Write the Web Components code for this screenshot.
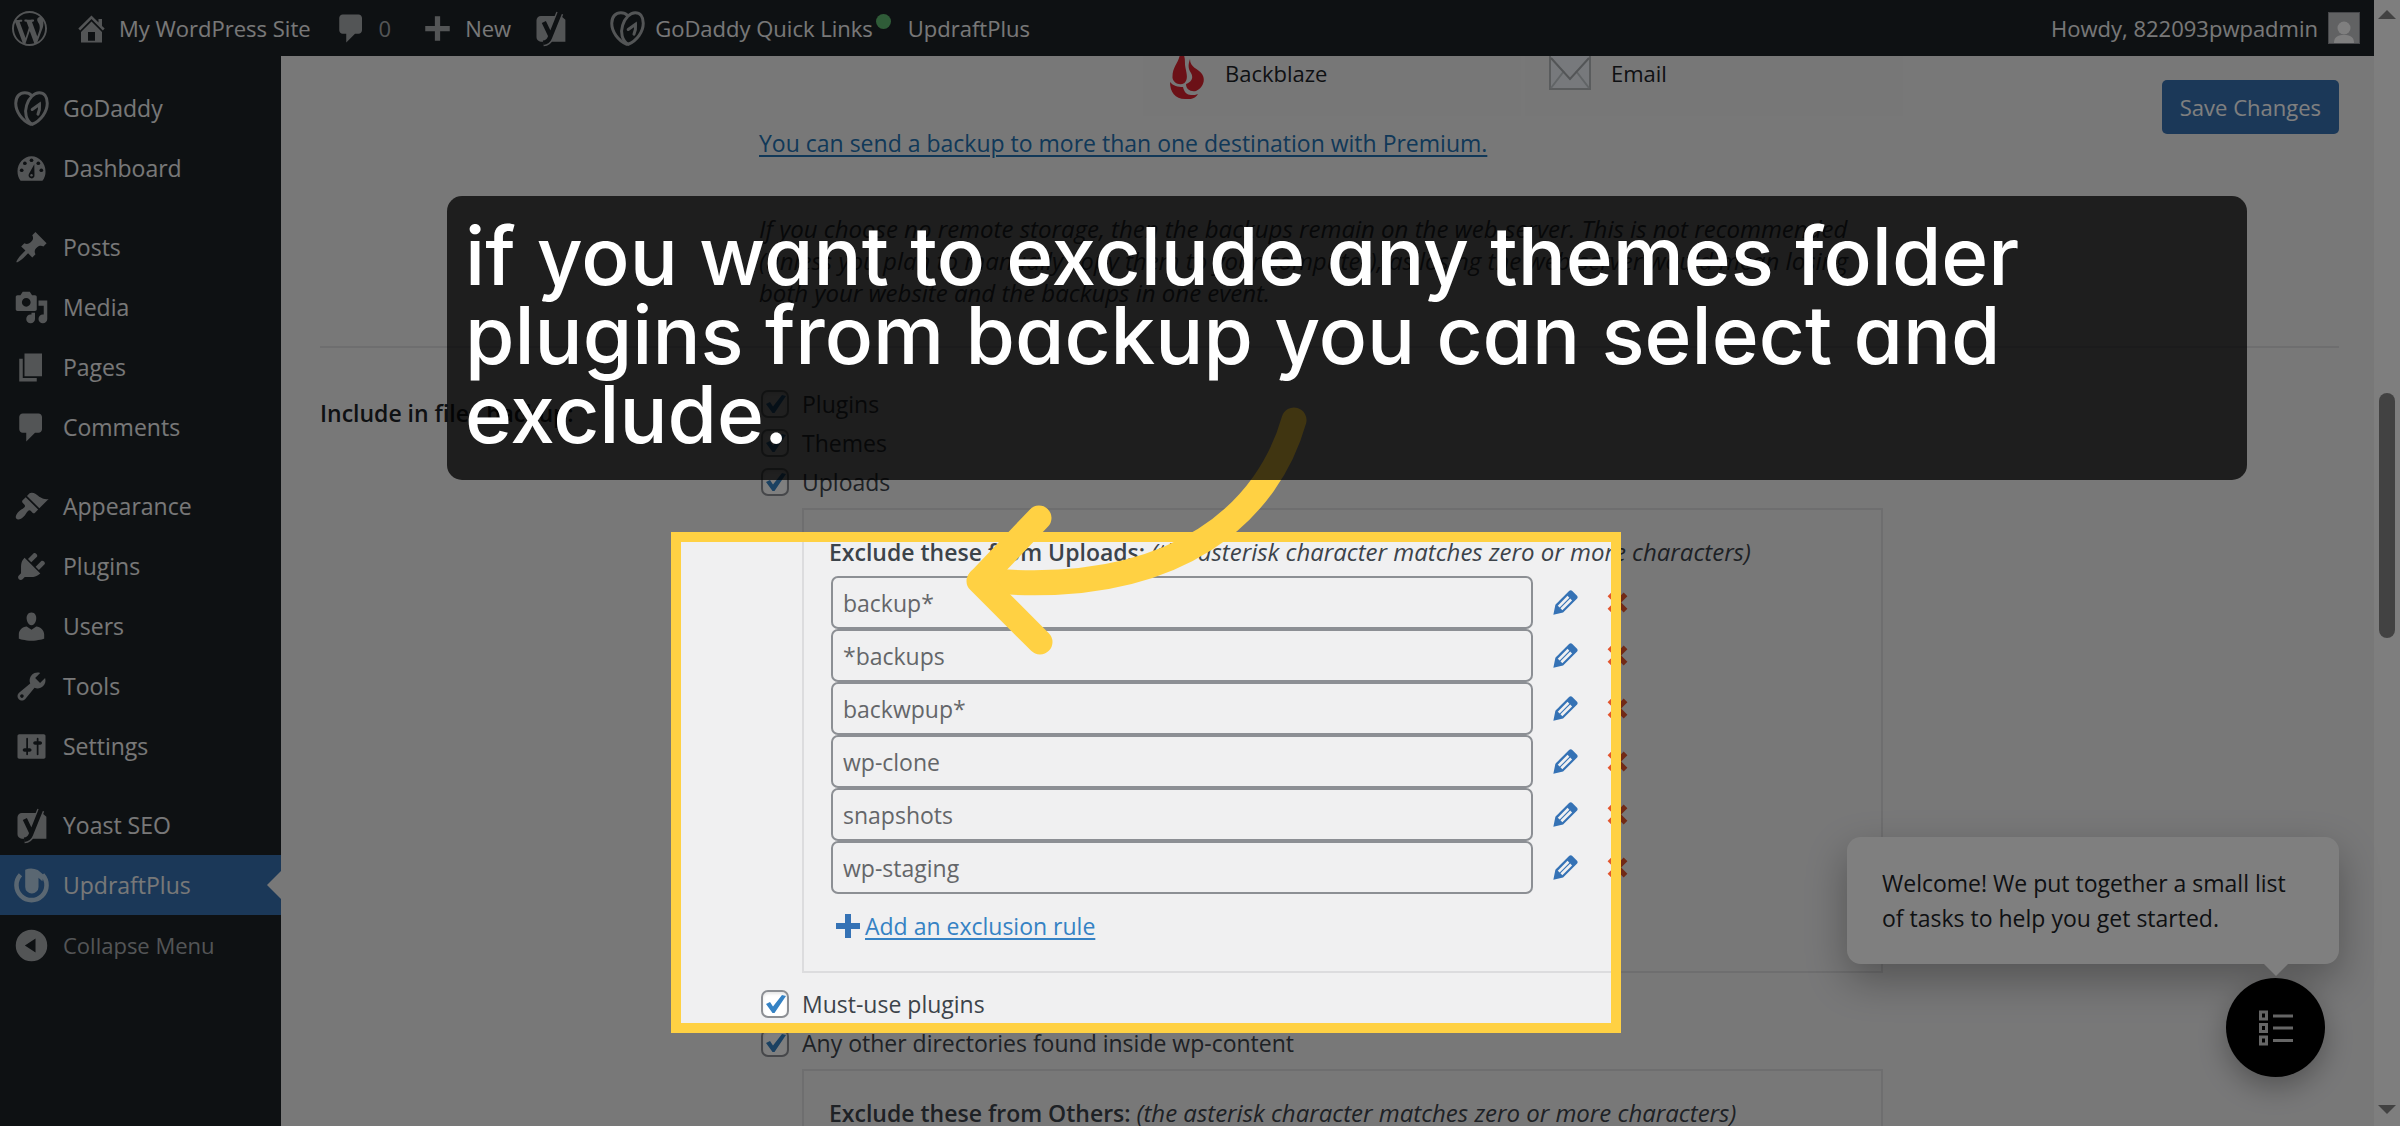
<!DOCTYPE html>
<html lang="en">
<head>
<meta charset="utf-8">
<title>UpdraftPlus settings</title>
<style>
  html, body {
    margin: 0;
    height: 100%;
    overflow: hidden;
  }

  body {
    font-family: "Open Sans", "Noto Sans", sans-serif;
    font-size: 23px;
    line-height: 32px;
    color: #3c434a;
    background: #f0f0f1;
  }
</style>
</head>
<body>
<wp-screen></wp-screen>

<script>
/* 20x20 glyphs, drawn with currentColor; --hole is the colour behind them */
const ICONS = {
  wordpress: '<path d="M20 10c0-5.51-4.49-10-10-10C4.48 0 0 4.49 0 10c0 5.52 4.48 10 10 10 5.51 0 10-4.48 10-10zM7.78 15.37L4.37 6.22c.55-.02 1.17-.08 1.17-.08.5-.06.44-1.13-.06-1.11 0 0-1.45.11-2.37.11-.18 0-.37 0-.58-.01C4.12 2.69 6.87 1.11 10 1.11c2.33 0 4.45.87 6.05 2.34-.68-.11-1.65.39-1.65 1.58 0 .74.45 1.36.9 2.1.35.61.55 1.36.55 2.46 0 1.49-1.4 5-1.4 5l-3.03-8.37c.54-.02.82-.17.82-.17.5-.05.44-1.25-.06-1.22 0 0-1.44.12-2.38.12-.87 0-2.33-.12-2.33-.12-.5-.03-.56 1.2-.06 1.22l.92.08 1.26 3.41zM17.41 10c.24-.64.74-1.87.43-4.25.7 1.29 1.05 2.71 1.05 4.25 0 3.29-1.73 6.24-4.4 7.78.97-2.59 1.94-5.2 2.92-7.78zM6.1 18.09C3.12 16.65 1.11 13.53 1.11 10c0-1.3.23-2.48.72-3.59C3.25 10.3 4.67 14.2 6.1 18.09zm4.03-6.63l2.58 6.98c-.86.29-1.76.45-2.71.45-.79 0-1.57-.11-2.29-.33.81-2.38 1.62-4.74 2.42-7.1z"/>',
  home: '<path fill-rule="evenodd" d="M16 8.5l1.53 1.53-1.06 1.06L10 4.6l-6.47 6.49-1.06-1.06L10 2.5l4 4v-2h2v4zm-6-2.46l6 5.99V18H4v-5.97zM12 17v-5H8v5h4z"/>',
  comments: '<path d="M5 2h9c1.1 0 2 .9 2 2v7c0 1.1-.9 2-2 2h-2l-5 5v-5H5c-1.1 0-2-.9-2-2V4c0-1.1.9-2 2-2z"/>',
  plus: '<path d="M17 8.500v3h-5.500V17h-3v-5.500H3v-3h5.500V3h3v5.500z"/>',
  yoast: '<path d="M4.500 2.800h11.500L18.500 5v12.500h-14A2.500 2.500 0 0 1 2 15V5.300a2.500 2.500 0 0 1 2.500-2.500z"/><g fill="none" stroke-linejoin="round"><path stroke="currentColor" stroke-width="4.200" d="M15.300 1.200L9.600 15.300Q8.600 17.900 6 18"/><path stroke="var(--hole)" stroke-width="2.600" d="M15.500.6L9.600 15.300Q8.600 17.900 5.800 18.200M6.200 6.300l3.600 7.500"/></g>',
  godaddy: '<g fill="none" stroke="currentColor" stroke-width="1.700" stroke-linecap="round"><path d="M9.600 19C4.600 17 1 11.800 1 7 1 3 3.400 1 6.200 1c1.600 0 2.900.6 3.800 1.600"/><path d="M10.400 19C6.800 17 5.900 12.200 7.200 8.200 8.500 4 11.500 1 14.400 1 17.200 1 19 3.200 19 7c0 4.800-3.600 10-8.600 12z"/><path d="M10.400 10.600l4.200-3c.2 2-.2 4-.9 5.600"/></g>',
  dashboard: '<path d="M3.760 17h12.480A8.400 8.400 0 0 0 18 11.500C18 7 14.420 3 10 3s-8 4-8 8.500c0 2 .66 4.100 1.760 5.500z"/><g fill="var(--hole)"><circle cx="10" cy="5.300" r="1.050"/><circle cx="6.200" cy="7" r="1.050"/><circle cx="13.900" cy="7" r="1.050"/><circle cx="4.400" cy="11" r="1.050"/><circle cx="15.600" cy="11" r="1.050"/><path d="M11.600 7.600l.1 6.100a1.700 1.700 0 1 1-3.200-.5z"/></g><circle cx="10" cy="13.900" r=".7"/>',
  posts: '<path d="M10.440 3.020l1.820-1.820 6.360 6.350-1.830 1.820c-1.050-.68-2.480-.57-3.410.36l-.75.75c-.92.93-1.040 2.350-.35 3.410l-1.830 1.820-2.410-2.410-2.800 2.790c-.42.42-3.380 2.710-3.800 2.290s1.860-3.390 2.280-3.810l2.790-2.790L4.100 9.360l1.830-1.820c1.050.69 2.480.57 3.400-.36l.75-.75c.93-.92 1.050-2.350.36-3.410z"/>',
  media: '<path fill-rule="evenodd" d="M13 11V4c0-.55-.45-1-1-1h-1.670L9 1H5L3.670 3H2c-.55 0-1 .45-1 1v7c0 .55.45 1 1 1h10c.55 0 1-.45 1-1zM7 4.500c1.380 0 2.500 1.120 2.500 2.500S8.380 9.500 7 9.500 4.500 8.380 4.500 7 5.620 4.500 7 4.500zM14 6h5v10.500c0 1.380-1.120 2.500-2.500 2.500S14 17.880 14 16.500s1.120-2.500 2.500-2.500c.17 0 .34.02.5.05V9h-3V6zm-4 8.050V13h2v3.500c0 1.380-1.120 2.500-2.500 2.500S7 17.880 7 16.500 8.120 14 9.500 14c.17 0 .34.02.5.05z"/>',
  pages: '<path d="M6 15V2h10v13H6zm-1 1h8v2H3V5h2v11z"/>',
  appearance: '<path d="M14.480 11.060L7.410 3.990l1.500-1.500c.5-.56 2.300-.47 3.510.32 1.210.8 1.430 1.280 2.910 2.100 1.180.64 2.450 1.260 4.450.85zm-.71.71L6.700 4.700 4.930 6.470c-.39.39-.39 1.020 0 1.410l1.060 1.060c.39.39.39 1.030 0 1.420-.6.6-1.430 1.110-2.210 1.690-.35.26-.7.53-1.010.84C1.430 14.230.4 16.080 1.400 17.070c.99 1 2.840-.03 4.180-1.360.31-.31.58-.66.85-1.020.57-.78 1.080-1.610 1.690-2.210.39-.39 1.020-.39 1.410 0l1.060 1.060c.39.39 1.020.39 1.410 0z"/>',
  plugins: '<path d="M13.110 4.360L9.870 7.600 8 5.730l3.240-3.240c.35-.34 1.050-.2 1.560.32.52.51.66 1.210.31 1.550zm-8 1.770l.91-1.120 9.010 9.010-1.190.84c-.71.71-2.630 1.160-3.820 1.160H6.140L4.900 17.260c-.59.59-1.540.59-2.120 0-.59-.58-.59-1.530 0-2.120l1.240-1.240v-3.880c0-1.130.4-3.190 1.090-3.890zm7.260 3.970l3.240-3.240c.34-.35 1.040-.21 1.550.31.52.51.66 1.210.31 1.550l-3.240 3.250z"/>',
  users: '<path d="M10 9.250c-2.270 0-2.730-3.440-2.730-3.440C7 4.020 7.820 2 9.970 2c2.160 0 2.980 2.020 2.710 3.810 0 0-.41 3.440-2.680 3.440zm0 2.570L12.720 10c2.390 0 4.520 2.330 4.520 4.530v2.490s-3.650 1.130-7.240 1.130c-3.650 0-7.240-1.130-7.240-1.130v-2.490c0-2.250 1.940-4.480 4.470-4.480z"/>',
  tools: '<path fill-rule="evenodd" d="M16.680 9.770c-1.340 1.340-3.300 1.670-4.950.99l-5.410 6.520c-.99.99-2.590.99-3.580 0s-.99-2.590 0-3.570l6.520-5.420c-.68-1.650-.35-3.610.99-4.950 1.280-1.280 3.120-1.620 4.720-1.060l-2.890 2.890 2.820 2.820 2.860-2.870c.53 1.580.18 3.390-1.080 4.650zM3.810 16.210c.4.39 1.040.39 1.430 0 .4-.4.4-1.040 0-1.430-.39-.4-1.030-.4-1.430 0-.39.39-.39 1.030 0 1.430z"/>',
  settings: '<path fill-rule="evenodd" d="M18 16V4c0-.55-.45-1-1-1H3c-.55 0-1 .45-1 1v12c0 .55.45 1 1 1h14c.55 0 1-.45 1-1zM8 11h1c.55 0 1 .45 1 1s-.45 1-1 1H8v1.500c0 .28-.22.5-.5.5s-.5-.22-.5-.5V13H6c-.55 0-1-.45-1-1s.45-1 1-1h1V5.500c0-.28.22-.5.5-.5s.5.22.5.5V11zm5-2h-1c-.55 0-1-.45-1-1s.45-1 1-1h1V5.500c0-.28.22-.5.5-.5s.5.22.5.5V7h1c.55 0 1 .45 1 1s-.45 1-1 1h-1v5.500c0 .28-.22.5-.5.5s-.5-.22-.5-.5V9z"/>',
  updraft: '<path fill="none" stroke="currentColor" stroke-width="2.600" d="M3.700 3.900A8.600 8.600 0 1 0 16.300 3.900"/><path d="M6.400 1Q10-.5 13.600 1.200L17 4l-.8 3.500-2.200-2v5.300a3.800 3.800 0 0 1-7.600 0z"/>',
  collapse: '<path fill-rule="evenodd" d="M10 1a9 9 0 1 1 0 18 9 9 0 0 1 0-18zm2.300 13V6L6.200 10z"/>',
  edit: '<path fill-rule="evenodd" d="M13.890 3.390l2.710 2.720c.46.46.42 1.240.03 1.640l-8.010 8.020-5.560 1.160 1.160-5.580s7.600-7.630 7.990-8.030c.39-.39 1.220-.39 1.680.07zm-2.730 2.790l-5.590 5.610 1.110 1.110 5.540-5.650zm-2.970 8.230l5.580-5.600-1.070-1.080-5.590 5.600z"/>',
  remove: '<path d="M12.120 10l3.530 3.530-2.120 2.120L10 12.120l-3.540 3.540-2.120-2.120L7.880 10 4.340 6.460l2.120-2.120L10 7.880l3.540-3.530 2.120 2.120z"/>',
};

function define(name, html, setup) {
  const template = document.createElement('template');
  template.innerHTML = html;
  customElements.define(name, class extends HTMLElement {
    constructor() {
      super();
      this.attachShadow({ mode: 'open' });
      this.shadowRoot.appendChild(template.content.cloneNode(true));
    }

    connectedCallback() {
      if (setup) setup(this, this.shadowRoot);
    }
  });
}

define('wp-icon', `
  <style>
    :host { display: block; flex: none; width: 35px; height: 35px; }
    svg { display: block; width: 100%; height: 100%; fill: currentColor; overflow: visible; }
  </style>
  <svg viewBox="0 0 20 20" aria-hidden="true"></svg>
`, (host, root) => {
  root.querySelector('svg').innerHTML = ICONS[host.getAttribute('name')];
});

define('bar-item', `
  <style>
    :host { display: block; }
    a {
      display: flex;
      align-items: center;
      gap: 10px;
      height: 100%;
      color: #f0f0f1;
      text-decoration: none;
    }
    wp-icon { color: #a7aaad; --hole: #1d2327; }
    :host([muted]) a { color: #a7aaad; }
  </style>
  <a href="#"><wp-icon></wp-icon><slot></slot></a>
`, (host, root) => {
  const icon = root.querySelector('wp-icon');
  if (host.hasAttribute('icon')) {
    const fresh = document.createElement('wp-icon');
    fresh.setAttribute('name', host.getAttribute('icon'));
    icon.replaceWith(fresh);
  } else {
    icon.remove();
  }
  if (host.hasAttribute('label')) root.querySelector('a').setAttribute('aria-label', host.getAttribute('label'));
});

define('admin-bar', `
  <style>
    :host {
      display: flex;
      align-items: stretch;
      height: 56px;
      padding: 0 14px 0 12px;
      box-sizing: border-box;
      background: #1d2327;
      font-size: 22px;
    }
    .home { margin-left: 27px; }
    .notes { margin-left: 23px; }
    .new { margin-left: 29px; }
    .seo { margin-left: 22px; }
    .quick { margin-left: 42px; }
    .plus { margin-left: 17px; }
    .me { margin-left: auto; }
    .dot {
      align-self: flex-start;
      width: 15px;
      height: 15px;
      margin: 14px 0 0 -7px;
      border-radius: 50%;
      background: #5fb870;
    }
    .avatar { display: block; }
  </style>
  <bar-item icon="wordpress" label="About WordPress"></bar-item>
  <bar-item class="home" icon="home">My WordPress Site</bar-item>
  <bar-item class="notes" icon="comments" muted>0</bar-item>
  <bar-item class="new" icon="plus">New</bar-item>
  <bar-item class="seo" icon="yoast" label="Yoast SEO"></bar-item>
  <bar-item class="quick" icon="godaddy">GoDaddy Quick Links<span class="dot"></span></bar-item>
  <bar-item class="plus">UpdraftPlus</bar-item>
  <bar-item class="me">Howdy, 822093pwpadmin
    <svg class="avatar" width="32" height="32" viewBox="0 0 32 32" aria-hidden="true">
      <rect width="32" height="32" fill="#8c8f94"/>
      <rect x="1" y="1" width="30" height="30" fill="#c3c4c7"/>
      <circle cx="16" cy="16" r="6.500" fill="#fff"/>
      <path fill="#fff" d="M6 31c0-7 5-8 10-8s10 1 10 8z"/>
    </svg>
  </bar-item>
`);

define('menu-item', `
  <style>
    :host { display: block; }
    :host([gap]) { margin-top: 19px; }
    a {
      position: relative;
      display: flex;
      align-items: center;
      gap: 14px;
      height: 60px;
      padding-left: 14px;
      color: #f0f0f1;
      text-decoration: none;
    }
    .icon { display: flex; color: #a7aaad; --hole: #1d2327; }
    :host([current]) a { background: #3670b0; }
    :host([current]) .icon { color: #b5cfe4; --hole: #3670b0; }
    :host([current]) a::after {
      content: "";
      position: absolute;
      right: 0;
      border: 14px solid transparent;
      border-left: 0;
      border-right-color: #f0f0f1;
    }
    :host([muted]) a { color: #a7aaad; font-size: 22px; }
  </style>
  <a href="#"><span class="icon"></span><slot></slot></a>
`, (host, root) => {
  root.querySelector('.icon').innerHTML = `<wp-icon name="${host.getAttribute('icon')}"></wp-icon>`;
});

define('admin-menu', `
  <style>
    :host { display: block; width: 281px; padding-top: 22px; box-sizing: border-box; background: #1d2327; }
  </style>
  <nav aria-label="Main menu">
    <menu-item icon="godaddy">GoDaddy</menu-item>
    <menu-item icon="dashboard">Dashboard</menu-item>
    <menu-item icon="posts" gap>Posts</menu-item>
    <menu-item icon="media">Media</menu-item>
    <menu-item icon="pages">Pages</menu-item>
    <menu-item icon="comments">Comments</menu-item>
    <menu-item icon="appearance" gap>Appearance</menu-item>
    <menu-item icon="plugins">Plugins</menu-item>
    <menu-item icon="users">Users</menu-item>
    <menu-item icon="tools">Tools</menu-item>
    <menu-item icon="settings">Settings</menu-item>
    <menu-item icon="yoast" gap>Yoast SEO</menu-item>
    <menu-item icon="updraft" current>UpdraftPlus</menu-item>
    <menu-item icon="collapse" muted>Collapse Menu</menu-item>
  </nav>
`);

define('check-row', `
  <style>
    :host { display: block; }
    label { display: flex; align-items: center; gap: 13px; height: 39px; padding-left: 2px; }
    .box { display: grid; width: 28px; height: 28px; }
    .box > * { grid-area: 1 / 1; }
    input {
      appearance: none;
      width: 28px;
      height: 28px;
      margin: 0;
      border: 2px solid #8c8f94;
      border-radius: 7px;
      background: #fff;
      box-shadow: inset 0 2px 3px rgba(0, 0, 0, .1);
    }
    svg { width: 28px; height: 28px; visibility: hidden; pointer-events: none; }
    input:checked + svg { visibility: visible; }
  </style>
  <label>
    <span class="box">
      <input type="checkbox" checked>
      <svg viewBox="0 0 28 28"><path fill="#3582c4" d="M5 14l4-2 3 4.500L21 5l4 1-11.500 17h-2z"/></svg>
    </span>
    <slot></slot>
  </label>
`);

define('exclude-rule', `
  <style>
    :host { display: flex; align-items: center; height: 53px; }
    input {
      flex: none;
      width: 702px;
      height: 53px;
      margin: 0 15px 0 0;
      padding: 0 10px;
      box-sizing: border-box;
      border: 2px solid #8c8f94;
      border-radius: 7px;
      background: transparent;
      font: inherit;
      color: #646669;
    }
    button { padding: 0; border: 0; background: none; color: #3572b5; }
    .remove { margin-left: 17px; color: #e2552f; }
  </style>
  <input type="text" readonly aria-label="Exclusion rule">
  <button type="button" aria-label="Edit"><wp-icon name="edit"></wp-icon></button>
  <button type="button" class="remove" aria-label="Delete"><wp-icon name="remove"></wp-icon></button>
`, (host, root) => {
  root.querySelector('input').value = host.getAttribute('value');
});

define('exclude-panel', `
  <style>
    :host {
      display: block;
      max-width: 1081px;
      margin: 7px 0 11px 43px;
      padding: 26px 25px 29px;
      box-sizing: border-box;
      border: 2px solid #dcdcde;
    }
    p { margin: 0 0 8px; white-space: nowrap; }
    b { font-weight: 600; }
    i { font-size: 24px; }
    .rules { padding-left: 2px; }
    .add { display: flex; align-items: center; gap: 5px; margin: 16px 0 0 7px; color: #3572b5; }
    .add svg { fill: currentColor; }
    a { color: #3582c4; text-decoration-thickness: 2px; text-underline-offset: 3px; }
  </style>
  <p><b>Exclude these from <slot name="what"></slot>:</b> <i>(the asterisk character matches zero or more characters)</i></p>
  <div class="rules"><slot></slot></div>
  <div class="add">
    <svg width="24" height="24" viewBox="0 0 24 24" aria-hidden="true"><path d="M9 0h6v9h9v6h-9v9H9v-9H0V9h9z"/></svg>
    <a href="#">Add an exclusion rule</a>
  </div>
`);

define('storage-card', `
  <style>
    :host {
      display: flex;
      gap: 20px;
      height: 60px;
      padding-left: 24px;
      box-sizing: border-box;
      font-size: 22px;
      line-height: 34px;
      color: #1d2327;
      background: #eeeeef;
    }
    ::slotted(svg) { flex: none; }
  </style>
  <slot name="logo"></slot><span><slot></slot></span>
`);

define('settings-page', `
  <style>
    :host { display: block; overflow: hidden; padding: 0 35px 0 39px; }
    section { display: grid; grid-template-columns: 439px minmax(0, 1fr) auto; }
    .storage { padding-bottom: 37px; border-bottom: 2px solid #dcdcde; }
    .info { grid-column: 2; }
    .cards { display: grid; grid-template-columns: 378px 378px; gap: 4px; margin-left: 384px; }
    .premium { margin: 11px 0 54px; }
    .premium a { color: #2271b1; text-decoration-thickness: 2px; text-underline-offset: 3px; }
    .warning { max-width: 1110px; margin: 0; font-size: 24px; font-style: italic; white-space: nowrap; }
    button {
      grid-column: 3;
      align-self: start;
      height: 54px;
      margin-top: 24px;
      padding: 0 18px;
      border: 0;
      border-radius: 5px;
      background: #3670b0;
      color: #fff;
      font: inherit;
      font-size: 22px;
    }
    h2 { margin: 49px 0 0; font: inherit; font-weight: 600; color: #1d2327; }
    .checks { grid-column: 2 / 4; padding-top: 36px; }
  </style>
  <section class="storage">
    <div class="info">
      <div class="cards">
        <storage-card>
          <svg slot="logo" width="38" height="43" viewBox="0 0 38 43" aria-hidden="true">
            <g fill="#d9232e"><path d="M13-6C14 6 5 9 5.500 22c1 5 7 8 12 5 4-4 2-10 1-15C17 6 20 0 13-6z"/><path d="M23 3c-2 6-2 10 1 14 3 5 0 9-5 11 0 5 4 8 10 7 7-3 10-11 6-17C31 12 23 12 23 3z"/><path d="M3 26c3 4 8 5 13 5 1 5 4 8 8 8 3 0 5 0 7-1-2 4-7 6-13 5C8 43 3 36 3 26z"/></g>
          </svg>
          Backblaze
        </storage-card>
        <storage-card>
          <svg slot="logo" width="42" height="34" viewBox="0 0 42 34" aria-hidden="true">
            <path fill="#eef3f8" stroke="#b4b8bb" stroke-width="2" d="M1-4h40v37H1z"/>
            <path fill="none" stroke="#c3c9cd" stroke-width="2" d="M2 32L15 15M40 32L27 15"/>
            <path fill="none" stroke="#a7abae" stroke-width="2" d="M2 2l19 21L40 2"/>
          </svg>
          Email
        </storage-card>
      </div>
      <p class="premium"><a href="#">You can send a backup to more than one destination with Premium.</a></p>
      <p class="warning">If you choose no remote storage, then the backups remain on the web-server. This is not recommended<br>(unless you plan to manually copy them to your computer), as losing the web-server would mean losing<br>both your website and the backups in one event.</p>
    </div>
    <button type="button">Save Changes</button>
  </section>
  <section>
    <h2>Include in files backup:</h2>
    <div class="checks">
      <check-row>Plugins</check-row>
      <check-row>Themes</check-row>
      <check-row>Uploads</check-row>
      <exclude-panel>
        <span slot="what">Uploads</span>
        <exclude-rule value="backup*"></exclude-rule>
        <exclude-rule value="*backups"></exclude-rule>
        <exclude-rule value="backwpup*"></exclude-rule>
        <exclude-rule value="wp-clone"></exclude-rule>
        <exclude-rule value="snapshots"></exclude-rule>
        <exclude-rule value="wp-staging"></exclude-rule>
      </exclude-panel>
      <check-row>Must-use plugins</check-row>
      <check-row>Any other directories found inside wp-content</check-row>
      <exclude-panel><span slot="what">Others</span></exclude-panel>
    </div>
  </section>
`);

define('scroll-track', `
  <style>
    :host {
      display: flex;
      flex-direction: column;
      align-items: center;
      justify-content: space-between;
      padding: 10px 0 12px;
      box-sizing: border-box;
      background: #fcfcfc;
    }
    svg { fill: #858585; }
    .run { flex: 1; padding-top: 374px; }
    .thumb { width: 16px; height: 245px; border-radius: 8px; background: #858585; }
  </style>
  <svg width="18" height="9" viewBox="0 0 18 9" aria-hidden="true"><path d="M9 0l9 9H0z"/></svg>
  <div class="run"><div class="thumb"></div></div>
  <svg width="18" height="9" viewBox="0 0 18 9" aria-hidden="true"><path d="M0 0h18L9 9z"/></svg>
`);

define('task-helper', `
  <style>
    :host {
      position: absolute;
      right: 61px;
      bottom: 49px;
      display: flex;
      flex-direction: column;
      align-items: flex-end;
      gap: 14px;
      line-height: 35px;
      color: #1d2327;
    }
    .bubble {
      position: relative;
      width: 492px;
      padding: 29px 35px 28px;
      box-sizing: border-box;
      border-radius: 14px;
      background: #fff;
      box-shadow: 0 16px 40px rgba(0, 0, 0, .3);
    }
    .bubble::after {
      content: "";
      position: absolute;
      top: 100%;
      right: 51px;
      border: 12px solid transparent;
      border-top-color: #fff;
      border-bottom: 0;
    }
    p { margin: 0; white-space: nowrap; }
    button {
      display: grid;
      place-items: center;
      width: 99px;
      height: 99px;
      margin-right: 14px;
      padding: 0;
      border: 0;
      border-radius: 50%;
      background: #000;
      box-shadow: 0 10px 28px rgba(0, 0, 0, .3);
    }
  </style>
  <div class="bubble"><p>Welcome! We put together a small list<br>of tasks to help you get started.</p></div>
  <button type="button" aria-label="Tasks">
    <svg width="36" height="36" viewBox="0 0 36 36" fill="none" stroke="#ccc" stroke-width="3">
      <path d="M2.500 2h6v7h-6zM2.500 14.500h6v7h-6zM2.500 27h6v7h-6zM15 6h20M15 18h20M15 30.500h20"/>
    </svg>
  </button>
`);

/* dimmed page with one lit frame, an arrow and its caption */
define('tour-step', `
  <style>
    :host { position: absolute; inset: 0; overflow: hidden; pointer-events: none; }
    .frame {
      position: absolute;
      left: 671px;
      top: 532px;
      width: 950px;
      height: 501px;
      box-sizing: border-box;
      border: 10px solid #ffd143;
      box-shadow: 0 0 0 3000px rgba(0, 0, 0, .5);
    }
    svg { position: absolute; left: 0; top: 0; }
    .caption {
      position: absolute;
      left: 447px;
      top: 196px;
      width: 1800px;
      height: 284px;
      padding: 20px 18px;
      box-sizing: border-box;
      border-radius: 15px;
      background: rgba(0, 0, 0, .75);
      color: #fff;
      font: 500 80px/79px Inter, sans-serif;
      font-feature-settings: "cv11";
      white-space: nowrap;
    }
  </style>
  <div class="frame"></div>
  <svg width="1400" height="700" fill="none" stroke="#ffd143" stroke-width="25" stroke-linecap="round" stroke-linejoin="round" aria-hidden="true">
    <path d="M1294 420C1270 505 1185 600 980 580"/>
    <path d="M1039 518L979 581l61 61"/>
  </svg>
  <div class="caption">if you want to exclude any themes folder<br>plugins from backup you can select and<br>exclude.</div>
`);

define('wp-screen', `
  <style>
    :host {
      position: relative;
      display: grid;
      grid-template: 56px minmax(0, 1fr) / auto minmax(0, 1fr) 26px;
      height: 100vh;
      overflow: hidden;
    }
    admin-bar { grid-column: 1 / 3; }
    scroll-track { grid-column: 3; grid-row: 1 / 3; }
  </style>
  <admin-bar></admin-bar>
  <admin-menu></admin-menu>
  <settings-page></settings-page>
  <scroll-track></scroll-track>
  <task-helper></task-helper>
  <tour-step></tour-step>
`);
</script>
</body>
</html>
